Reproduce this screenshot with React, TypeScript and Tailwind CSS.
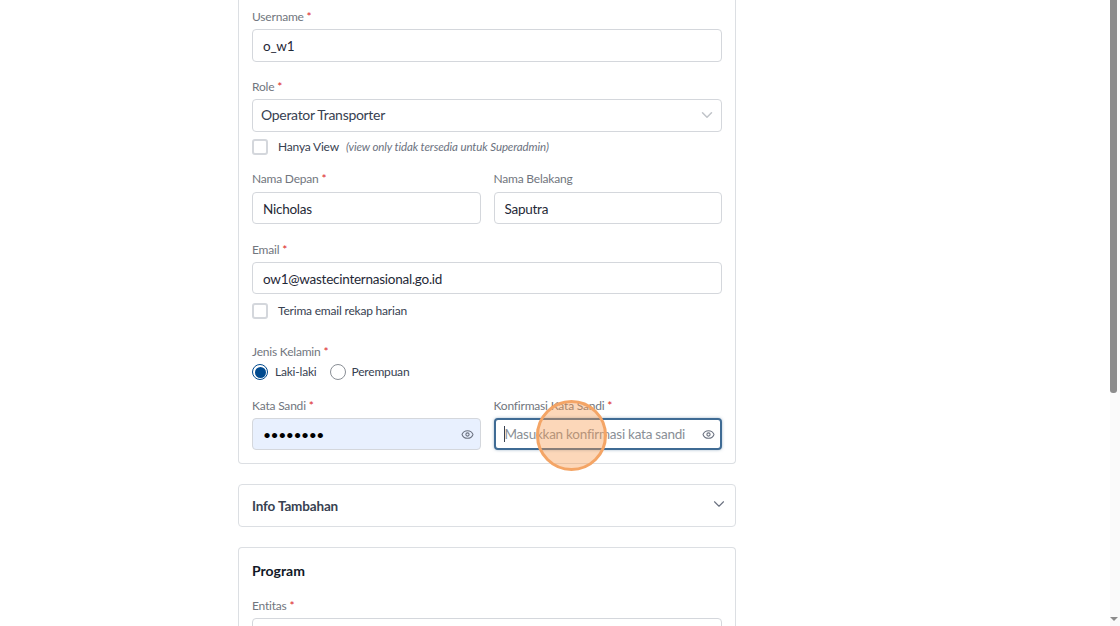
import { ChevronDown, Eye } from "lucide-react";

const font = { fontFamily: "Lato, 'Noto Sans', sans-serif" };

function Label({ text, required = true }: { text: string; required?: boolean }) {
  return (
    <div className="h-5 text-xs leading-5 tracking-[-0.2px] text-[#71767e]">
      {text}
      {required && <span className="text-[#dc2626]"> *</span>}
    </div>
  );
}

function TextInput({ value, h = "h-8" }: { value: string; h?: string }) {
  return (
    <div className={`${h} flex items-center rounded border border-[#d4d7dc] bg-white px-[10px] pt-[1px] text-[13.5px] tracking-[-0.25px] text-[#1f2937]`}>
      {value}
    </div>
  );
}

function Check({ label, note }: { label: string; note?: string }) {
  return (
    <div className="flex items-center gap-[10px]">
      <div className="h-4 w-4 rounded-[3px] border-2 border-[#d4d7dc] bg-white" />
      <span className="text-xs tracking-[-0.2px] text-[#374151]">{label}</span>
      {note && <span className="ml-[-3px] text-[11.5px] italic tracking-[-0.1px] text-[#6b7280]">{note}</span>}
    </div>
  );
}

export default function App() {
  return (
    <div className="flex h-[626px] w-[1120px] overflow-hidden bg-white" style={font}>
      <div className="flex-1 pl-[238px]">
        {/* アカウント情報 */}
        <div className="relative w-[498px] rounded-b border-x border-b border-[#dcdfe3] px-[13px] pb-[13px] pt-[7px]">
          <Label text="Username" />
          <div className="mt-[2px]">
            <TextInput value="o_w1" h="h-[33px]" />
          </div>

          <div className="mt-[15px]">
            <Label text="Role" />
          </div>
          <div className="mt-[2px] flex h-[33px] items-center justify-between rounded border border-[#d4d7dc] bg-white pb-[1px] pl-2 pr-[5px] text-sm tracking-[-0.3px] text-[#374151]">
            Operator Transporter
            <ChevronDown className="h-[18px] w-[18px] text-[#c0c4c9]" />
          </div>
          <div className="mt-[6px]">
            <Check label="Hanya View" note="(view only tidak tersedia untuk Superadmin)" />
          </div>

          <div className="mt-[14px] grid grid-cols-2 gap-x-[13px]">
            <div>
              <Label text="Nama Depan" />
              <div className="mt-[3px]">
                <TextInput value="Nicholas" />
              </div>
            </div>
            <div>
              <Label text="Nama Belakang" required={false} />
              <div className="mt-[3px]">
                <TextInput value="Saputra" />
              </div>
            </div>
          </div>

          <div className="mt-4">
            <Label text="Email" />
          </div>
          <div className="mt-[2px]">
            <TextInput value="ow1@wastecinternasional.go.id" />
          </div>
          <div className="mt-[9px]">
            <Check label="Terima email rekap harian" />
          </div>

          <div className="mt-[23px]">
            <Label text="Jenis Kelamin" />
          </div>
          <div className="mt-[2px] flex items-center text-xs tracking-[-0.2px] text-[#374151]">
            <div className="flex h-4 w-4 items-center justify-center rounded-full border border-[#004a8f]">
              <div className="h-[11px] w-[11px] rounded-full bg-[#004a8f]" />
            </div>
            <span className="ml-[7px]">Laki-laki</span>
            <div className="ml-[13px] h-4 w-4 rounded-full border border-[#8a8f96]" />
            <span className="ml-[6px]">Perempuan</span>
          </div>

          <div className="mt-4 grid grid-cols-2 gap-x-[13px]">
            <div>
              <Label text="Kata Sandi" />
              <div className="mt-[2px] flex h-8 items-center justify-between rounded border border-[#d4d7dc] bg-[#e8f0fe] pl-[10px] pr-[6px]">
                <span className="pt-[1px] text-sm tracking-[-0.5px] text-black">••••••••</span>
                <Eye className="h-[13px] w-[13px] text-[#6b7280]" />
              </div>
            </div>
            <div>
              <Label text="Konfirmasi Kata Sandi" />
              <div className="mt-[2px] flex h-8 items-center justify-between rounded border-2 border-[#3f6b94] bg-white pl-2 pr-[5px] shadow-[0_0_3px_rgba(63,107,148,0.5)]">
                <span className="border-l border-[#374151] text-[13.5px] leading-4 tracking-[-0.25px] text-[#8a8f96]">Masukkan konfirmasi kata sandi</span>
                <Eye className="h-[13px] w-[13px] text-[#6b7280]" />
              </div>
            </div>
          </div>

          {/* クリック位置のハイライト */}
          <div className="absolute left-[297px] top-[400px] h-[71px] w-[71px] rounded-full border-[3px] border-[#f4a566] bg-[#f79a4f]/40" />
        </div>

        {/* Info Tambahan */}
        <div className="mt-5 flex h-[43px] w-[498px] items-center justify-between rounded border border-[#dcdfe3] pl-[13px] pr-[7px]">
          <span className="pt-[1px] text-[13.5px] font-bold tracking-[-0.15px] text-[#374151]">Info Tambahan</span>
          <ChevronDown className="mb-[3px] h-[18px] w-[18px] text-[#6b7280]" strokeWidth={1.5} />
        </div>

        {/* Program */}
        <div className="mt-5 w-[498px] rounded-t border-x border-t border-[#dcdfe3] px-[13px] pt-3">
          <div className="pt-[1px] text-sm font-bold leading-5 text-[#111827]">Program</div>
          <div className="mt-[15px]">
            <Label text="Entitas" />
          </div>
          <div className="mt-[2px] h-8 rounded border border-[#d4d7dc]" />
        </div>
      </div>

      {/* スクロールバー */}
      <div className="relative w-[10px] bg-[#fafafa]">
        <div className="h-[393px] w-[7px] rounded-b-[3px] bg-[#8c8c8c]" />
        <div className="absolute bottom-[5px] left-0 h-0 w-0 border-x-[4px] border-t-[4px] border-x-transparent border-t-[#8c8c8c]" />
      </div>
    </div>
  );
}
